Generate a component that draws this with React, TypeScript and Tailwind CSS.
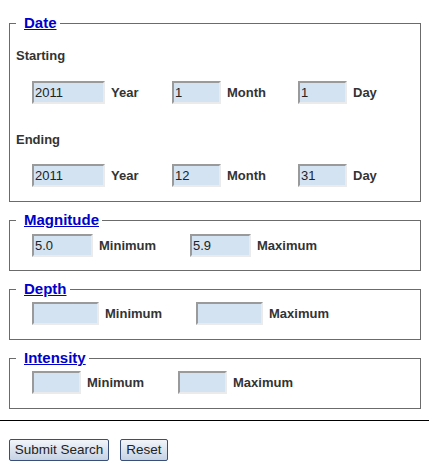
import React from "react";

const inputCls =
  "h-[23px] bg-[#d3e3f1] border-2 border-t-[#9a9a9a] border-l-[#9a9a9a] border-b-[#ebebeb] border-r-[#ebebeb] px-[1px] text-[13px] text-[#222] outline-none";

const labelCls = "text-[13px] font-bold text-[#333] pl-[6px]";

const Legend = ({ children }: { children: React.ReactNode }) => (
  <legend className="pl-[8px] pr-[3px] text-[15px] font-bold leading-[18px]">
    <a href="#" className="text-[#0000cc] underline">
      {children}
    </a>
  </legend>
);

const RangeRow = ({
  w,
  min = "",
  max = "",
}: {
  w: string;
  min?: string;
  max?: string;
}) => (
  <div className="flex items-center pl-[16px] h-[23px]">
    <input className={`${inputCls} ${w}`} defaultValue={min} />
    <span className={`${labelCls} w-[97px]`}>Minimum</span>
    <input className={`${inputCls} ${w}`} defaultValue={max} />
    <span className={labelCls}>Maximum</span>
  </div>
);

export default function App() {
  return (
    <div className="w-[429px] h-[463px] bg-white font-['Liberation_Sans',Arial,sans-serif] text-[#333] pt-[14px] overflow-hidden">
      <form onSubmit={(e) => e.preventDefault()}>
        <fieldset className="mx-[9px] border border-[#6b6b6b] pl-[6px] pr-[6px] pb-[14px] w-[412px]">
          <Legend>Date</Legend>
          <div className="text-[13px] font-bold text-[#333] mt-[16px] leading-[16px]">Starting</div>
          <div className="flex items-center pl-[16px] mt-[17px] h-[23px]">
            <input className={`${inputCls} w-[73px]`} defaultValue="2011" />
            <span className={`${labelCls} w-[67px]`}>Year</span>
            <input className={`${inputCls} w-[49px]`} defaultValue="1" />
            <span className={`${labelCls} w-[77px]`}>Month</span>
            <input className={`${inputCls} w-[49px]`} defaultValue="1" />
            <span className={labelCls}>Day</span>
          </div>
          <div className="text-[13px] font-bold text-[#333] mt-[28px] leading-[16px]">Ending</div>
          <div className="flex items-center pl-[16px] mt-[16px] h-[23px]">
            <input className={`${inputCls} w-[73px]`} defaultValue="2011" />
            <span className={`${labelCls} w-[67px]`}>Year</span>
            <input className={`${inputCls} w-[49px]`} defaultValue="12" />
            <span className={`${labelCls} w-[77px]`}>Month</span>
            <input className={`${inputCls} w-[49px]`} defaultValue="31" />
            <span className={labelCls}>Day</span>
          </div>
        </fieldset>

        <fieldset className="mx-[9px] mt-[9px] border border-[#6b6b6b] pl-[6px] pr-[6px] pb-[13px] w-[412px]">
          <Legend>Magnitude</Legend>
          <div className="mt-[5px]">
            <RangeRow w="w-[61px]" min="5.0" max="5.9" />
          </div>
        </fieldset>

        <fieldset className="mx-[9px] mt-[9px] border border-[#6b6b6b] pl-[6px] pr-[6px] pb-[14px] w-[412px]">
          <Legend>Depth</Legend>
          <div className="mt-[4px]">
            <RangeRow w="w-[67px]" />
          </div>
        </fieldset>

        <fieldset className="mx-[9px] mt-[9px] border border-[#6b6b6b] pl-[6px] pr-[6px] pb-[14px] w-[412px]">
          <Legend>Intensity</Legend>
          <div className="mt-[4px]">
            <RangeRow w="w-[49px]" />
          </div>
        </fieldset>

        <hr className="mt-[11px] border-t border-black" />

        <div className="flex gap-[11px] pl-[9px] mt-[18px]">
          <button
            type="submit"
            className="h-[22px] w-[100px] rounded-[2px] border border-[#3a4f78] bg-gradient-to-b from-[#f2f5fa] to-[#c6d2e4] text-[13.5px] text-[#222] leading-none"
          >
            Submit Search
          </button>
          <button
            type="reset"
            className="h-[22px] w-[48px] rounded-[2px] border border-[#3a4f78] bg-gradient-to-b from-[#f2f5fa] to-[#c6d2e4] text-[13.5px] text-[#222] leading-none"
          >
            Reset
          </button>
        </div>
      </form>
    </div>
  );
}
